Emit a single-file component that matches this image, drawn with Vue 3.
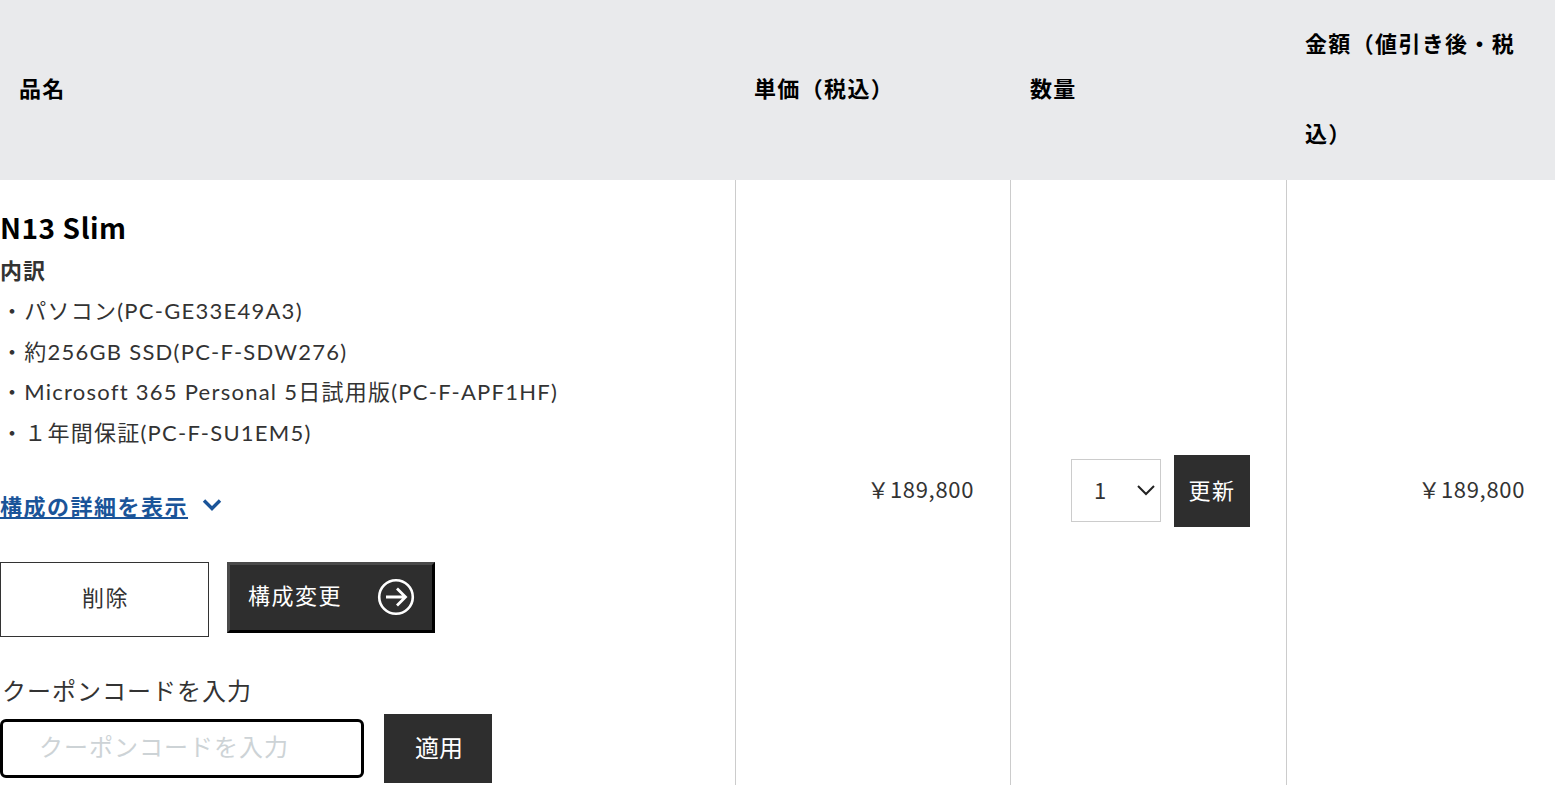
<template>
  <table class="cart-table">
    <colgroup>
      <col class="col-name" />
      <col class="col-price" />
      <col class="col-qty" />
      <col class="col-total" />
    </colgroup>
    <thead>
      <tr>
        <th><div class="th-label">品名</div></th>
        <th><div class="th-label">単価（税込）</div></th>
        <th><div class="th-label">数量</div></th>
        <th><div class="th-label">金額（値引き後・税込）</div></th>
      </tr>
    </thead>
    <tbody>
      <tr>
        <td class="item-cell">
          <h2 class="item-name">N13 Slim</h2>
          <p class="breakdown-title">内訳</p>
          <ul class="breakdown">
            <li v-for="line in breakdown" :key="line">・{{ line }}</li>
          </ul>
          <a class="detail-link" href="#"><span>構成の詳細を表示</span>
            <svg class="chevron" width="20" height="14" viewBox="0 0 20 14">
              <path d="M2 2.5 L10 10.5 L18 2.5" fill="none" stroke="#1a5499" stroke-width="3.4" />
            </svg>
          </a>
          <div class="item-actions">
            <button class="btn-delete" type="button">削除</button>
            <button class="btn-change" type="button">
              <span>構成変更</span>
              <svg width="38" height="38" viewBox="0 0 38 38">
                <circle cx="19" cy="19" r="16.8" fill="none" stroke="#fff" stroke-width="2.6" />
                <path d="M9 19 H28 M20 10.5 L28.5 19 L20 27.5" fill="none" stroke="#fff" stroke-width="2.8" />
              </svg>
            </button>
          </div>
          <label class="coupon-label" for="coupon">クーポンコードを入力</label>
          <div class="coupon-row">
            <input id="coupon" class="coupon-input" type="text" placeholder="クーポンコードを入力" />
            <button class="btn-apply" type="button">適用</button>
          </div>
        </td>
        <td class="price-cell">￥189,800</td>
        <td class="qty-cell">
          <div class="qty-wrap">
            <div class="qty-select">
              <select v-model="qty">
                <option v-for="n in 5" :key="n" :value="n">{{ n }}</option>
              </select>
              <svg class="qty-arrow" width="20" height="12" viewBox="0 0 20 12">
                <path d="M2 2 L10 10 L18 2" fill="none" stroke="#222" stroke-width="2" />
              </svg>
            </div>
            <button class="btn-update" type="button">更新</button>
          </div>
        </td>
        <td class="total-cell">￥189,800</td>
      </tr>
    </tbody>
  </table>
</template>

<script setup>
import { ref } from 'vue'

const qty = ref(1)

const breakdown = [
  'パソコン(PC-GE33E49A3)',
  '約256GB SSD(PC-F-SDW276)',
  'Microsoft 365 Personal 5日試用版(PC-F-APF1HF)',
  '１年間保証(PC-F-SU1EM5)'
]
</script>

<style>
html,
body {
  margin: 0;
  overflow: hidden;
  background: #fff;
}
</style>

<style scoped>
.cart-table {
  width: 1555px;
  table-layout: fixed;
  border-collapse: separate;
  border-spacing: 0;
  font-family: "Noto Sans CJK JP", "Noto Sans", sans-serif;
  font-size: 22px;
  color: #333;
}

.col-name { width: 735px; }
.col-price { width: 275px; }
.col-qty { width: 276px; }
.col-total { width: 269px; }

th {
  background: #e9eaec;
  color: #000;
  font-weight: 700;
  line-height: 90px;
  letter-spacing: 1.35px;
  text-align: left;
  padding: 0 30px 0 19px;
  height: 180px;
  box-sizing: border-box;
}

th:nth-child(3) {
  padding-left: 20px;
}

/* フォントの縦位置補正 */
.th-label {
  margin: -3px 0 3px;
}

td {
  height: 620px;
  padding: 0;
  border-left: 1px solid #ccc;
  box-sizing: border-box;
  vertical-align: middle;
  letter-spacing: 0.03em;
}

td:first-child {
  border-left: 0;
}

.item-cell {
  vertical-align: top;
  padding-top: 27px;
}

.item-name {
  margin: 0;
  font-size: 28px;
  line-height: 40px;
  font-weight: 700;
  color: #000;
  letter-spacing: 0.02em;
}

.breakdown-title {
  margin: 2px 0 0;
  font-weight: 700;
  line-height: 40px;
  letter-spacing: 0.05em;
}

.breakdown {
  list-style: none;
  margin: 2px 0 0;
  padding: 0 0 0 1px;
  font-family: Lato, "Noto Sans CJK JP", sans-serif;
  font-weight: 400;
  letter-spacing: 1.25px;
}

.breakdown li {
  line-height: 40.7px;
}

.detail-link {
  display: flex;
  align-items: center;
  gap: 14px;
  margin-top: 31px;
  color: #1a5499;
  font-weight: 700;
  line-height: 40px;
  letter-spacing: 1.5px;
}

.detail-link span {
  text-decoration: underline;
}

.item-actions {
  display: flex;
  align-items: flex-start;
  gap: 18px;
  margin-top: 37px;
}

button {
  font-family: inherit;
  font-size: 22px;
  letter-spacing: 1.5px;
  cursor: pointer;
}

.btn-delete {
  width: 209px;
  height: 75px;
  background: #fff;
  color: #333;
  border: 1px solid #333;
  padding: 0 0 6px 2px;
}

.btn-change {
  display: flex;
  align-items: center;
  justify-content: space-between;
  width: 208px;
  height: 71px;
  box-sizing: border-box;
  padding: 0 17px 0 18px;
  background: #2e2e2e;
  color: #fff;
  border: 3px solid;
  border-color: #4a4a4a #000 #000 #4a4a4a;
}

.btn-change span {
  padding-bottom: 6px;
}

.coupon-label {
  display: block;
  margin-top: 33px;
  padding-left: 2px;
  font-size: 24px;
  line-height: 40px;
  letter-spacing: 1px;
}

.coupon-row {
  display: flex;
  align-items: center;
  gap: 20px;
  margin-top: 4px;
}

.coupon-input {
  width: 364px;
  height: 59px;
  box-sizing: border-box;
  border: 3px solid #000;
  border-radius: 6px;
  padding: 0 36px 6px;
  font-family: inherit;
  font-size: 24px;
  letter-spacing: 1px;
  outline: none;
}

.coupon-input::placeholder {
  color: #cdd3d6;
}

.btn-apply {
  width: 108px;
  height: 69px;
  background: #2e2e2e;
  color: #fff;
  border: 0;
  padding: 0 0 4px 2px;
  font-size: 24px;
  letter-spacing: 0;
}

.price-cell {
  text-align: right;
  padding-right: 36px;
  padding-bottom: 4px;
}

.total-cell {
  text-align: right;
  padding-right: 30px;
  padding-bottom: 4px;
}

.qty-wrap {
  display: flex;
  align-items: center;
  gap: 13px;
  padding-left: 60px;
}

.qty-select {
  position: relative;
  width: 90px;
  height: 63px;
}

.qty-select select {
  appearance: none;
  width: 100%;
  height: 100%;
  box-sizing: border-box;
  border: 1px solid #ccc;
  border-radius: 0;
  background: #fff;
  padding: 0 0 2px 22px;
  font-family: inherit;
  font-size: 22px;
  color: #333;
}

.qty-arrow {
  position: absolute;
  right: 5px;
  top: 25px;
  pointer-events: none;
}

.btn-update {
  width: 76px;
  height: 72px;
  margin-top: 2px;
  background: #2e2e2e;
  color: #fff;
  border: 0;
  padding: 0 0 4px;
}
</style>
